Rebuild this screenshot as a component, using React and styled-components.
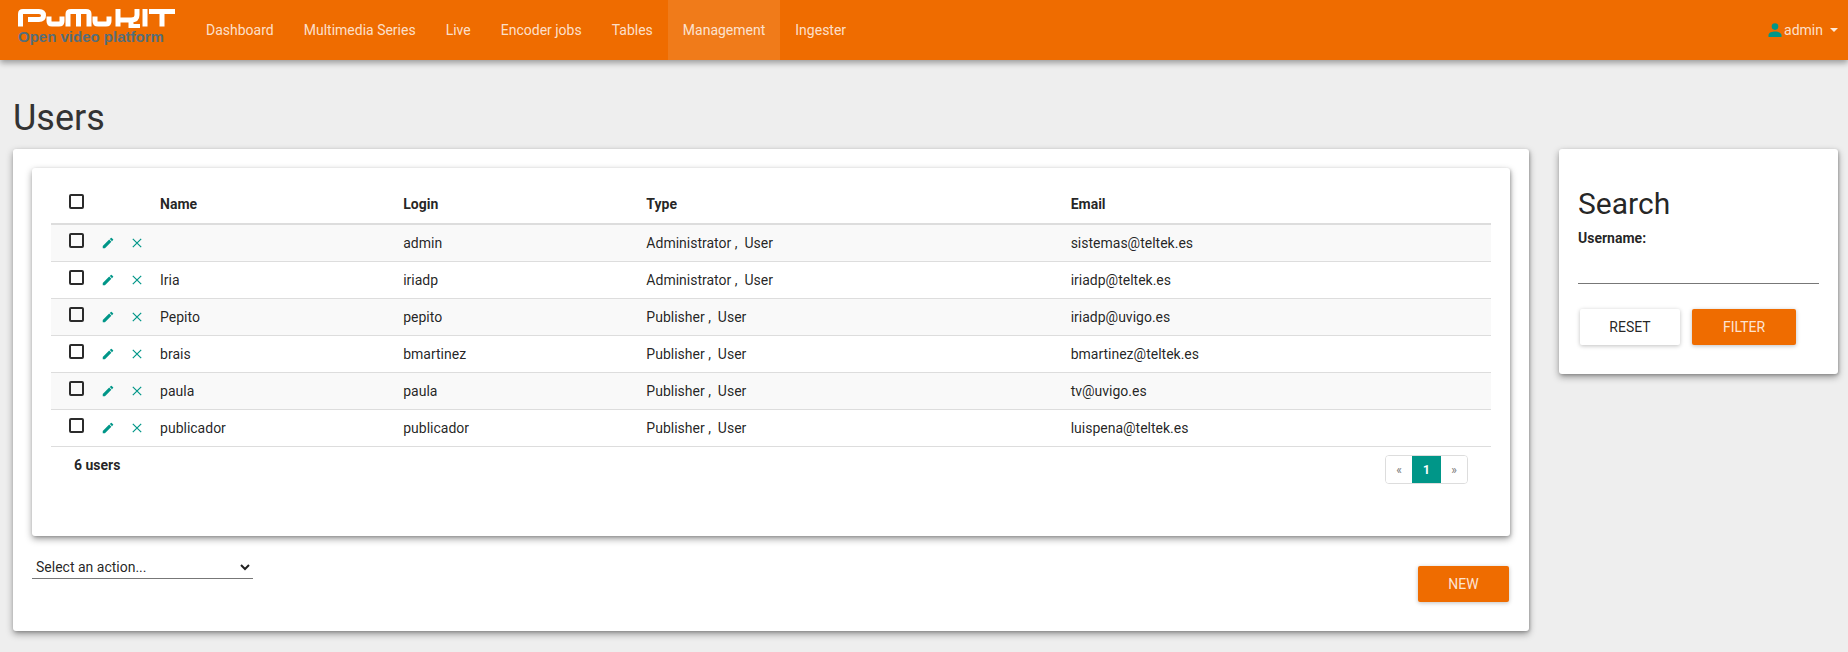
import React from 'react';
import styled, { createGlobalStyle } from 'styled-components';

const Global = createGlobalStyle`
  html, body { margin: 0; padding: 0; background: #eeeeee; }
  body { font-family: Roboto, "Liberation Sans", sans-serif; font-size: 14px; color: rgba(0,0,0,.87); }
  * { box-sizing: border-box; }
`;

const Navbar = styled.header`
  height: 60px; background: #ef6c00; display: flex; align-items: stretch;
  box-shadow: 0 3px 6px rgba(0,0,0,.35); position: relative;
`;
const Brand = styled.a`
  width: 191px; flex: none; padding: 8px 0 0 18px; display: flex; flex-direction: column;
`;
const BrandTag = styled.span`
  font: 700 15px/16px "Liberation Sans", Arial, sans-serif; color: #546e7a; margin-top: 1px; white-space: nowrap;
`;
const NavLinks = styled.nav`display: flex; flex: 1;`;
const NavLink = styled.a`
  display: flex; align-items: center; padding: 0 15px; line-height: 60px; white-space: nowrap;
  color: rgba(255,255,255,.8);
  background: ${p => (p.$active ? 'rgba(255,255,255,.1)' : 'transparent')};
`;
const UserMenu = styled.a`
  display: flex; align-items: center; padding: 0 10px 0 0; color: rgba(255,255,255,.8);
`;
const Caret = styled.span`
  display: inline-block; margin-left: 7px; width: 0; height: 0;
  border-top: 4px solid rgba(255,255,255,.85); border-left: 4px solid transparent; border-right: 4px solid transparent;
`;

const Page = styled.main`padding: 38px 10px 21px 13px;`;
const Title = styled.h1`
  margin: 0 0 11px; font-size: 36px; line-height: 40px; font-weight: 400; color: #333;
`;
const Columns = styled.div`
  display: grid; grid-template-columns: 1516px 279px; column-gap: 30px; align-items: start;
`;
const Card = styled.section`
  background: #fff; border-radius: 3px;
  box-shadow: 0 3px 7px rgba(0,0,0,.38), 1px 1px 3px rgba(0,0,0,.18);
`;
const MainCard = styled(Card)`padding: 19px 19px 29px;`;
const TableCard = styled(Card)`height: 368px; padding: 17px 19px 0;`;
const Table = styled.table`
  width: 100%; border-collapse: separate; border-spacing: 0; table-layout: fixed;
`;
const Th = styled.th`
  height: 40px; padding: 0 8px; text-align: left; font-weight: 700; border-bottom: 2px solid #ddd;
`;
const Row = styled.tr`background: ${p => (p.$striped ? '#f9f9f9' : '#fff')};`;
const Td = styled.td`
  height: 37px; padding: 0 8px; border-bottom: 1px solid #ddd; white-space: nowrap; vertical-align: middle;
`;
const IconTd = styled(Td)`padding: 0;`;
const CheckCell = styled(Td)`padding: 0 0 0 18px;`;
const CheckHead = styled(Th)`padding: 0 0 0 18px;`;
const Check = styled.input.attrs({ type: 'checkbox' })`
  appearance: none; display: block; width: 15px; height: 15px; margin: 0 0 5px;
  border: 2px solid #2b2b2b; border-radius: 2px; background: transparent;
`;
const IconLink = styled.a`display: block; color: #009688; line-height: 0; padding-left: ${p => p.$pad}px;`;
const TableFooter = styled.div`
  display: flex; justify-content: space-between; align-items: flex-start; padding: 8px 23px 0;
`;
const Count = styled.strong`font-weight: 700; line-height: 20px;`;
const Pager = styled.ul`
  list-style: none; margin: 0; padding: 0; display: flex; height: 29px;
  border: 1px solid #ddd; border-radius: 4px; overflow: hidden;
`;
const PageItem = styled.li`
  width: ${p => (p.$active ? 29 : 26)}px; margin: ${p => (p.$active ? '-1px 0' : 0)};
  display: flex; align-items: center; justify-content: center; font-size: 12px;
  font-weight: ${p => (p.$active ? 700 : 400)};
  color: ${p => (p.$active ? '#fff' : '#777')};
  background: ${p => (p.$active ? '#009688' : '#fff')};
`;
const Actions = styled.div`
  display: flex; justify-content: space-between; align-items: flex-start; height: 47px; margin-top: 19px; padding-right: 1px;
`;
const ActionSelect = styled.select`
  width: 221px; height: 24px; border: 0; border-bottom: 1px solid #777; border-radius: 0; background: transparent;
  font: 14px Roboto, sans-serif; color: rgba(0,0,0,.87); outline: none;
`;
const Button = styled.button`
  height: 36px; width: ${p => p.$w}px; padding: 0; border: 0; border-radius: 2px; font: 14px Roboto, sans-serif;
  text-transform: uppercase;
  color: ${p => (p.$primary ? 'rgba(255,255,255,.84)' : 'rgba(0,0,0,.87)')};
  background: ${p => (p.$primary ? '#ef6c00' : '#fff')};
  box-shadow: 0 1px 4px rgba(0,0,0,.25);
`;
const NewButton = styled(Button)`margin-top: 11px;`;

const SearchCard = styled(Card)`height: 225px; padding: 37px 19px 0;`;
const SearchTitle = styled.h3`margin: 0; font-size: 30px; line-height: 36px; font-weight: 400;`;
const Label = styled.label`display: block; margin-top: 6px; font-weight: 700; line-height: 20px;`;
const TextInput = styled.input`
  display: block; width: 100%; height: 36px; margin-top: 0; border: 0; border-bottom: 1px solid #777; background: transparent; outline: none;
`;
const ButtonRow = styled.div`display: flex; gap: 12px; margin-top: 25px; padding-left: 2px;`;

const Pencil = () => (
  <svg width="14" height="14" viewBox="0 0 24 24" fill="currentColor">
    <path d="M3 17.25V21h3.75L17.81 9.94l-3.75-3.75L3 17.25zM20.71 7.04a1 1 0 0 0 0-1.41l-2.34-2.34a1 1 0 0 0-1.41 0l-1.83 1.83 3.75 3.75 1.83-1.83z" />
  </svg>
);
const Cross = () => (
  <svg width="10" height="10" viewBox="0 0 10 10" fill="none" stroke="currentColor" strokeWidth="1.2">
    <path d="M.8.8l8.4 8.4M9.2.8L.8 9.2" />
  </svg>
);
const Person = () => (
  <svg width="14" height="14" viewBox="0 0 14 14" fill="#009688" style={{ marginRight: 2 }}>
    <circle cx="7" cy="3.6" r="3.3" />
    <path d="M.5 14v-1.8C.5 9.7 4.2 8.6 7 8.6s6.5 1.100 6.500 3.600V14z" />
  </svg>
);
const Logo = () => (
  <svg width="158" height="20" viewBox="0 0 158 20" fill="none" stroke="#fff" strokeWidth="5" role="img" aria-label="PuMuKIT">
    <path d="M2.500 18.500V6Q2.500 3.500 5 3.500H21Q25.500 3.500 25.500 7.500T21 11.500H10" />
    <path d="M31 8.500V13Q31 16 34 16H41Q44 16 44 13V8.500" />
    <path d="M50 18.500V6Q50 3.500 53 3.500H68Q71 3.500 71 6V18.500M60.500 6V18.500" />
    <path d="M77 8.500V13Q77 16 80 16H88Q91 16 91 13V8.500" />
    <path d="M100 1V18.500M100 12H113Q119 12 119 7V1M113 12V18.500Q113 18.500 122 18.500" />
    <path d="M127 1V18.500" />
    <path d="M131 3.500H157M144 3.500V18.500" />
  </svg>
);

const users = [
  ['', 'admin', 'Administrator', 'sistemas@teltek.es'],
  ['Iria', 'iriadp', 'Administrator', 'iriadp@teltek.es'],
  ['Pepito', 'pepito', 'Publisher', 'iriadp@uvigo.es'],
  ['brais', 'bmartinez', 'Publisher', 'bmartinez@teltek.es'],
  ['paula', 'paula', 'Publisher', 'tv@uvigo.es'],
  ['publicador', 'publicador', 'Publisher', 'luispena@teltek.es'],
];
const navItems = ['Dashboard', 'Multimedia Series', 'Live', 'Encoder jobs', 'Tables', 'Management', 'Ingester'];
const colWidths = [42, 29, 30, 243, 243, 424, 428];

export default function App() {
  return (
    <>
      <Global />
      <Navbar>
        <Brand>
          <Logo />
          <BrandTag>Open video platform</BrandTag>
        </Brand>
        <NavLinks>
          {navItems.map(n => (
            <NavLink key={n} $active={n === 'Management'}>{n}</NavLink>
          ))}
        </NavLinks>
        <UserMenu><Person />admin<Caret /></UserMenu>
      </Navbar>
      <Page>
        <Title>Users</Title>
        <Columns>
          <MainCard>
            <TableCard>
              <Table>
                <colgroup>
                  {colWidths.map((w, i) => <col key={i} style={{ width: w }} />)}
                </colgroup>
                <thead>
                  <tr>
                    <CheckHead><Check /></CheckHead>
                    <Th />
                    <Th />
                    <Th>Name</Th>
                    <Th>Login</Th>
                    <Th>Type</Th>
                    <Th>Email</Th>
                  </tr>
                </thead>
                <tbody>
                  {users.map((u, i) => (
                    <Row key={u[1]} $striped={i % 2 === 0}>
                      <CheckCell><Check /></CheckCell>
                      <IconTd><IconLink $pad={8}><Pencil /></IconLink></IconTd>
                      <IconTd><IconLink $pad={10}><Cross /></IconLink></IconTd>
                      <Td>{u[0]}</Td>
                      <Td>{u[1]}</Td>
                      <Td>{u[2]} ,&nbsp; User</Td>
                      <Td>{u[3]}</Td>
                    </Row>
                  ))}
                </tbody>
              </Table>
              <TableFooter>
                <Count>6 users</Count>
                <Pager>
                  <PageItem>«</PageItem>
                  <PageItem $active>1</PageItem>
                  <PageItem>»</PageItem>
                </Pager>
              </TableFooter>
            </TableCard>
            <Actions>
              <ActionSelect defaultValue="">
                <option value="">Select an action...</option>
              </ActionSelect>
              <NewButton $primary $w={91}>New</NewButton>
            </Actions>
          </MainCard>
          <SearchCard>
            <SearchTitle>Search</SearchTitle>
            <Label>Username:</Label>
            <TextInput />
            <ButtonRow>
              <Button $w={100}>Reset</Button>
              <Button $primary $w={104}>Filter</Button>
            </ButtonRow>
          </SearchCard>
        </Columns>
      </Page>
    </>
  );
}
